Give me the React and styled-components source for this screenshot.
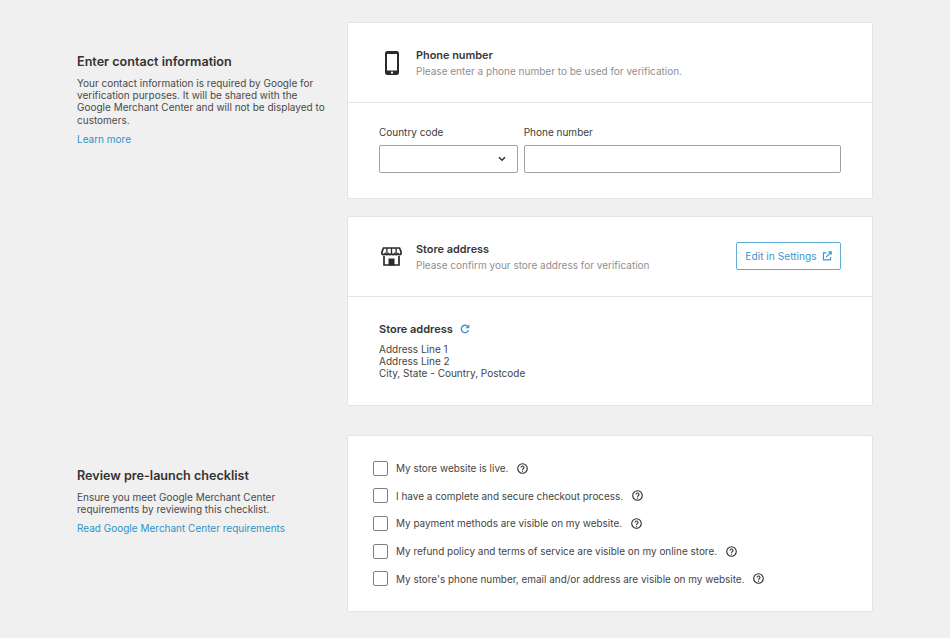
import styled, { createGlobalStyle } from "styled-components";

const GlobalStyle = createGlobalStyle`
  html, body {
    margin: 0;
    padding: 0;
    background: #f0f0f0;
    font-family: Inter, "Liberation Sans", sans-serif;
    color: #3c3c3c;
  }
`;

const Page = styled.div`
  width: 950px;
  height: 638px;
  overflow: hidden;
  box-sizing: border-box;
  padding: 22px 0 0 77px;
  display: flex;
  flex-direction: column;
  gap: 29px;
`;

const Section = styled.section`
  display: flex;
`;

const Intro = styled.div`
  width: 270px;
  flex: none;
  padding-top: ${(p) => p.$top}px;
  box-sizing: border-box;
`;

const IntroTitle = styled.h2`
  margin: 0 0 7px;
  font-size: 12.6px;
  line-height: 16px;
  font-weight: 600;
  color: #333;
`;

const IntroText = styled.p`
  margin: 0 0 7px;
  width: 252px;
  font-size: 10px;
  line-height: 12.2px;
  color: #4a4a4a;
`;

const Link = styled.a`
  font-size: 10px;
  line-height: 12px;
  color: #2f93c8;
  text-decoration: none;
  display: block;
`;

const Cards = styled.div`
  width: 526px;
  display: flex;
  flex-direction: column;
  gap: 17px;
`;

const Card = styled.div`
  background: #fff;
  border: 1px solid #e4e4e4;
  border-radius: 2px;
`;

const CardHeader = styled.div`
  height: 80px;
  box-sizing: border-box;
  padding: 0 31px;
  display: flex;
  align-items: center;
  border-bottom: 1px solid #e4e4e4;
`;

const IconSlot = styled.div`
  width: 25px;
  margin-right: 12px;
  flex: none;
  display: flex;
  align-items: center;
  justify-content: center;
  svg {
    display: block;
  }
`;

const HeaderText = styled.div`
  flex: 1;
`;

const HeaderTitle = styled.div`
  font-size: 10.9px;
  line-height: 14px;
  font-weight: 600;
  color: #383838;
  margin-bottom: 3px;
`;

const HeaderHint = styled.div`
  font-size: 10px;
  line-height: 13px;
  color: #8f8f8f;
`;

const CardBody = styled.div`
  padding: ${(p) => p.$pad};
`;

const FieldRow = styled.div`
  display: flex;
  gap: 6px;
`;

const Field = styled.div`
  width: ${(p) => p.$width}px;
`;

const FieldLabel = styled.label`
  display: block;
  font-size: 10px;
  line-height: 13px;
  color: #3c3c3c;
  margin-bottom: 6px;
`;

const InputBox = styled.div`
  height: 28px;
  box-sizing: border-box;
  border: 1px solid #a0a0a0;
  border-radius: 2px;
  display: flex;
  align-items: center;
  justify-content: flex-end;
  padding-right: 11px;
`;

const EditButton = styled.a`
  width: 105px;
  height: 28px;
  margin-bottom: 2px;
  box-sizing: border-box;
  flex: none;
  border: 1.5px solid #62add6;
  border-radius: 2px;
  color: #3d97c9;
  font-size: 10.2px;
  display: flex;
  align-items: center;
  justify-content: center;
  gap: 5px;
`;

const AddressTitle = styled.div`
  display: flex;
  align-items: center;
  gap: 7px;
  font-size: 11px;
  line-height: 14px;
  font-weight: 600;
  color: #333;
  margin-bottom: 7px;
`;

const AddressLines = styled.div`
  font-size: 10px;
  line-height: 12.2px;
  color: #444;
`;

const Checklist = styled.div`
  display: flex;
  flex-direction: column;
  gap: 12.7px;
  padding: 25px;
`;

const CheckRow = styled.label`
  display: flex;
  align-items: center;
  height: 15px;
  font-size: 9.95px;
  color: #444;
`;

const CheckBox = styled.span`
  width: 15px;
  height: 15px;
  box-sizing: border-box;
  border: 1px solid #808080;
  border-radius: 2px;
  background: #fff;
  margin-right: 8px;
  flex: none;
`;

const HelpMark = styled.svg`
  margin-left: 8.5px;
  flex: none;
`;

const PhoneIcon = () => (
  <svg width="14" height="24" viewBox="0 0 14 24">
    <path
      fill="#2b2b2b"
      fillRule="evenodd"
      d="M2.5 0h9A2.5 2.5 0 0 1 14 2.5v19a2.5 2.5 0 0 1-2.5 2.5h-9A2.500 2.500 0 0 1 0 21.500v-19A2.500 2.500 0 0 1 2.500 0zM2 3v16.500h10V3z"
    />
    <circle cx="7" cy="21.700" r="1.100" fill="#fff" />
  </svg>
);

const StoreIcon = () => (
  <svg width="21" height="19" viewBox="0 0 21 19" fill="none" stroke="#2b2b2b" strokeWidth="1.700">
    <path d="M2.500 1h16l1.600 4v1.800a1.900 1.900 0 0 1-3.200 0 1.900 1.900 0 0 1-3.200 0 1.900 1.900 0 0 1-3.200 0 1.900 1.900 0 0 1-3.200 0 1.900 1.900 0 0 1-3.200 0 1.900 1.900 0 0 1-3.200 0V5z" />
    <path d="M5.900 1v5.800M10.500 1v5.800M15.100 1v5.800" strokeWidth="1.300" />
    <path d="M3 9v9h15V9" />
    <rect x="7.500" y="11.500" width="6" height="7" fill="#2b2b2b" stroke="none" />
  </svg>
);

const Chevron = () => (
  <svg width="8" height="6" viewBox="0 0 8 6">
    <path d="M1 1.300 4 4.300 7 1.300" fill="none" stroke="#333" strokeWidth="1.500" />
  </svg>
);

const ExternalIcon = () => (
  <svg width="10" height="10" viewBox="0 0 11 11" fill="none" stroke="#3d97c9" strokeWidth="1.300">
    <path d="M5 2H1.600v7.800h7.800V6.500" />
    <path d="M4.500 6.700 10 1.200M6.800 .9h3.300v3.300" />
  </svg>
);

const RefreshIcon = () => (
  <svg width="10" height="10" viewBox="0 0 10 10" fill="none" stroke="#3d97c9" strokeWidth="1.400">
    <path d="M8.500 6.200A3.700 3.700 0 1 1 7.500 2.200" />
    <path d="M9.400.3v4H5.400z" fill="#3d97c9" stroke="none" />
  </svg>
);

const HelpIcon = () => (
  <HelpMark width="11" height="11" viewBox="0 0 12 12" fill="none">
    <circle cx="6" cy="6" r="5.200" stroke="#2b2b2b" strokeWidth="1.200" />
    <path d="M4.400 4.800a1.600 1.600 0 1 1 2.400 1.400c-.6.300-.8.600-.8 1.100" stroke="#2b2b2b" strokeWidth="1.200" />
    <circle cx="6" cy="8.900" r=".7" fill="#2b2b2b" />
  </HelpMark>
);

const checklist = [
  "My store website is live.",
  "I have a complete and secure checkout process.",
  "My payment methods are visible on my website.",
  "My refund policy and terms of service are visible on my online store.",
  "My store's phone number, email and/or address are visible on my website.",
];

const App = () => {
  return (
    <Page>
      <GlobalStyle />
      <Section>
        <Intro $top={32}>
          <IntroTitle>Enter contact information</IntroTitle>
          <IntroText>
            Your contact information is required by Google for verification purposes. It will be
            shared with the Google Merchant Center and will not be displayed to customers.
          </IntroText>
          <Link>Learn more</Link>
        </Intro>
        <Cards>
          <Card>
            <CardHeader>
              <IconSlot><PhoneIcon /></IconSlot>
              <HeaderText>
                <HeaderTitle>Phone number</HeaderTitle>
                <HeaderHint>Please enter a phone number to be used for verification.</HeaderHint>
              </HeaderText>
            </CardHeader>
            <CardBody $pad="23px 31px 25px">
              <FieldRow>
                <Field $width={139}>
                  <FieldLabel>Country code</FieldLabel>
                  <InputBox><Chevron /></InputBox>
                </Field>
                <Field $width={318}>
                  <FieldLabel>Phone number</FieldLabel>
                  <InputBox />
                </Field>
              </FieldRow>
            </CardBody>
          </Card>
          <Card>
            <CardHeader>
              <IconSlot><StoreIcon /></IconSlot>
              <HeaderText>
                <HeaderTitle>Store address</HeaderTitle>
                <HeaderHint>Please confirm your store address for verification</HeaderHint>
              </HeaderText>
              <EditButton>
                Edit in Settings
                <ExternalIcon />
              </EditButton>
            </CardHeader>
            <CardBody $pad="25px 31px 25px">
              <AddressTitle>
                Store address
                <RefreshIcon />
              </AddressTitle>
              <AddressLines>
                Address Line 1
                <br />
                Address Line 2
                <br />
                City, State - Country, Postcode
              </AddressLines>
            </CardBody>
          </Card>
        </Cards>
      </Section>
      <Section>
        <Intro $top={33}>
          <IntroTitle>Review pre-launch checklist</IntroTitle>
          <IntroText>
            Ensure you meet Google Merchant Center
            <br />
            requirements by reviewing this checklist.
          </IntroText>
          <Link>Read Google Merchant Center requirements</Link>
        </Intro>
        <Cards>
          <Card>
            <Checklist>
              {checklist.map((item) => (
                <CheckRow key={item}>
                  <CheckBox />
                  {item}
                  <HelpIcon />
                </CheckRow>
              ))}
            </Checklist>
          </Card>
        </Cards>
      </Section>
    </Page>
  );
};

export default App;
